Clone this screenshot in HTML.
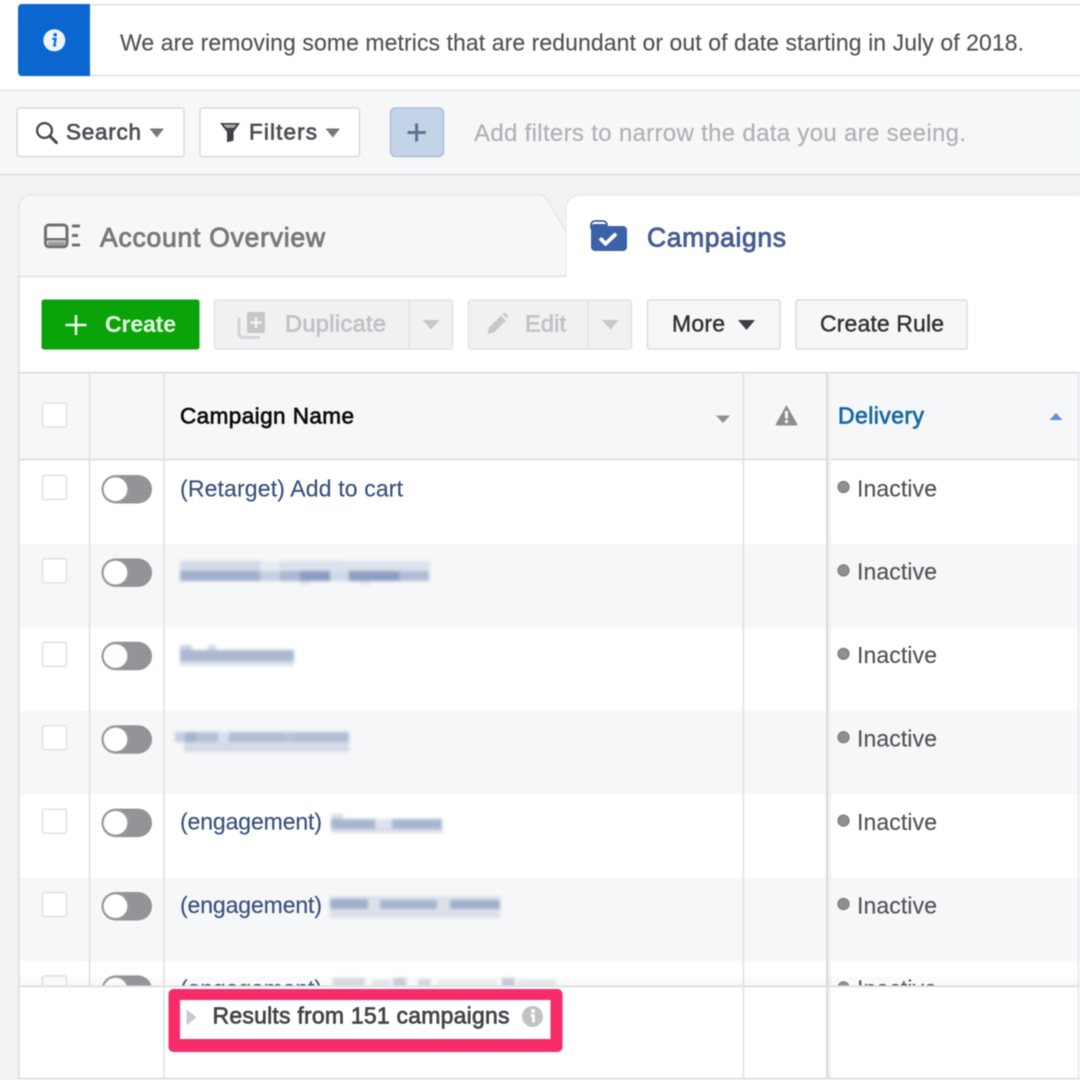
<!DOCTYPE html>
<html lang="en"><head><meta charset="utf-8"><title>Ads Manager</title>
<style>
html,body{margin:0;padding:0;width:1080px;height:1080px;overflow:hidden;background:#fff}
svg{display:block;position:absolute;left:0;top:0;filter:blur(.5px)}
text{font-family:"Liberation Sans",Arial,sans-serif;white-space:pre}
.m{stroke-width:.7;paint-order:stroke}
.b{font-weight:bold}
.n{font-size:23px;fill:#36507c;stroke:#36507c;stroke-width:.15}
.i{font-size:23px;fill:#4f5257;stroke:#4f5257;stroke-width:.15}
</style></head><body>
<svg width="1080" height="1080" viewBox="0 0 1080 1080" xmlns="http://www.w3.org/2000/svg">
<defs>
<g id="ck"><rect x="42.5" y="475.5" width="24" height="24" rx="2" fill="#fff" stroke="#dfe1e4" stroke-width="1.5"/></g>
<g id="tg"><rect x="101.5" y="475" width="50.5" height="28.5" rx="14.2" fill="#929497"/><circle cx="115.5" cy="489.2" r="12.6" fill="#fff" stroke="#9a9c9f" stroke-width="1.6"/></g>
<g id="dt"><circle cx="843.5" cy="487" r="5.6" fill="#8e9092" stroke="#737578" stroke-width="1"/></g>
<clipPath id="tc"><rect x="0" y="0" width="1080" height="986"/></clipPath>
</defs>

<!-- page background -->
<rect width="1080" height="1080" fill="#fff"/>
<rect y="175" width="1080" height="905" fill="#f0f2f4"/>

<!-- banner -->
<rect x="18" y="4" width="1062" height="1.6" fill="#e1e3e6"/>
<rect x="18" y="74.8" width="1062" height="1.6" fill="#dfe1e4"/>
<path d="M90 4H22a4 4 0 0 0-4 4v64a4 4 0 0 0 4 4h68z" fill="#0b66cf"/>
<circle cx="54.3" cy="40.3" r="11" fill="#eef5fc"/>
<circle cx="55.2" cy="34.8" r="1.8" fill="#0b66cf"/>
<path d="M52.4 38.8h3.2l-1.3 6.6h1.7" fill="none" stroke="#0b66cf" stroke-width="2.1"/>
<text x="120" y="50.5" font-size="23" fill="#4f5257" stroke="#4f5257" stroke-width=".15" textLength="904" lengthAdjust="spacing">We are removing some metrics that are redundant or out of date starting in July of 2018.</text>

<!-- filter bar -->
<rect y="91" width="1080" height="84" fill="#f6f7f9"/>
<rect y="89.3" width="1080" height="1.8" fill="#e3e5e8"/>
<rect y="173.6" width="1080" height="1.8" fill="#dee0e3"/>

<rect x="17" y="108" width="167" height="48.5" rx="2.5" fill="#fff" stroke="#d8dadd" stroke-width="1.5"/>
<circle cx="44.5" cy="130.5" r="7.4" fill="none" stroke="#44474b" stroke-width="2.3"/>
<path d="M49.8 136l6.6 6.6" stroke="#44474b" stroke-width="3" stroke-linecap="round"/>
<text x="66" y="139.5" font-size="22.5" fill="#4b4f56" stroke="#4b4f56" class="m" textLength="75" lengthAdjust="spacing">Search</text>
<path d="M149.5 128.5h14.5l-7.2 9z" fill="#74777c"/>

<rect x="200" y="108" width="159.5" height="48.5" rx="2.5" fill="#fff" stroke="#d8dadd" stroke-width="1.5"/>
<path d="M220 123h20l-6.4 9v8.6l-6.6 1.6V132z" fill="#3f4246"/>
<path d="M223.5 124.6h13l-2.6 3.2h-7.8z" fill="#a9abae"/>
<text x="249" y="139.5" font-size="22.5" fill="#4b4f56" stroke="#4b4f56" class="m" textLength="68" lengthAdjust="spacing">Filters</text>
<path d="M325.5 128.5h14.5l-7.2 9z" fill="#74777c"/>

<rect x="390.5" y="108" width="53" height="48.5" rx="5" fill="#c3d3e8" stroke="#afc0d7" stroke-width="1.5"/>
<path d="M416.6 123.5v18M407.5 132.5h18.2" stroke="#5c7391" stroke-width="3"/>
<text x="474" y="141" font-size="24" fill="#aeb1b5" stroke="#aeb1b5" stroke-width=".15" textLength="492" lengthAdjust="spacing">Add filters to narrow the data you are seeing.</text>

<!-- tabs -->
<path d="M19 277V207a12 12 0 0 1 12-12H538q7 0 10 6L566 232V277z" fill="#f6f7f9" stroke="#e3e5e8" stroke-width="1.3"/>
<path d="M566 277V209a14 14 0 0 1 14-14H1080V277z" fill="#fff"/>
<path d="M566 277V209a14 14 0 0 1 14-14H1080" fill="none" stroke="#e6e8ea" stroke-width="1.2"/>
<rect x="19" y="277" width="1061" height="100" fill="#fff"/>
<rect x="19" y="275.6" width="547.5" height="1.6" fill="#dfe1e4"/>
<rect x="18.2" y="277" width="1.6" height="100" fill="#dfe1e4"/>

<!-- account overview icon -->
<rect x="45.5" y="225" width="21.5" height="21.8" rx="3.5" fill="none" stroke="#6f7174" stroke-width="3"/>
<rect x="46" y="238" width="21" height="2.6" fill="#6f7174"/>
<rect x="48" y="241.5" width="17" height="4" fill="#9c9ea0"/>
<rect x="72" y="224.5" width="8" height="3" fill="#6f7174"/>
<rect x="72" y="234" width="6" height="3" fill="#6f7174"/>
<rect x="72" y="243.5" width="8" height="3" fill="#6f7174"/>
<text x="100" y="246.3" font-size="26.5" fill="#77797d" stroke="#77797d" stroke-width=".9" paint-order="stroke" textLength="225" lengthAdjust="spacing">Account Overview</text>

<!-- campaigns icon -->
<path d="M591 229v-4a4 4 0 0 1 4-4h8a4 4 0 0 1 4 4v1" fill="none" stroke="#2f4a7c" stroke-width="1.6"/>
<path d="M591 227a3 3 0 0 1 3-3h11q2 0 3 2h15a4 4 0 0 1 4 4v17a4 4 0 0 1-4 4H595a4 4 0 0 1-4-4z" fill="#3b62a9"/>
<path d="M600 238.3l5.6 5.4 10.5-10" fill="none" stroke="#fff" stroke-width="3.8"/>
<text x="647" y="246.3" font-size="26.5" fill="#475d94" stroke="#475d94" stroke-width=".9" paint-order="stroke" textLength="139" lengthAdjust="spacing">Campaigns</text>

<!-- toolbar -->
<rect x="41.5" y="299.5" width="158" height="50" rx="2.5" fill="#0aa30a"/>
<path d="M76 315v20M65.5 325h21" stroke="#eafbe8" stroke-width="2.6"/>
<text x="105" y="332" font-size="23" class="b" fill="#e8fae6" textLength="71" lengthAdjust="spacing">Create</text>

<rect x="214.5" y="300" width="238" height="49" rx="2.5" fill="#f0f1f3" stroke="#e2e3e6" stroke-width="1.5"/>
<rect x="408.5" y="300" width="1.3" height="49" fill="#dfe0e3"/>
<path d="M239 317.5v16a4 4 0 0 0 4 4h17" fill="none" stroke="#d3d5d8" stroke-width="3"/>
<rect x="247" y="312" width="18" height="21" rx="1.5" fill="#c6c8cb"/>
<path d="M256 317v11M250.5 322.5h11" stroke="#f5f5f6" stroke-width="2.2"/>
<text x="285" y="331.5" font-size="23.5" fill="#bfc2c6" stroke="#bfc2c6" class="m" textLength="101" lengthAdjust="spacing">Duplicate</text>
<path d="M422.5 320h17l-8.5 9.5z" fill="#c6c8cb"/>

<rect x="468.5" y="300" width="163" height="49" rx="2.5" fill="#f0f1f3" stroke="#e2e3e6" stroke-width="1.5"/>
<rect x="587.2" y="300" width="1.3" height="49" fill="#dfe0e3"/>
<path d="M487.5 334l1.5-6.5 12-12 5 5-12 12z" fill="#c6c8cb"/>
<path d="M502.5 314l2-1.8 4 4-2 2z" fill="#c6c8cb"/>
<text x="525" y="331.5" font-size="23.5" fill="#bfc2c6" stroke="#bfc2c6" class="m" textLength="41" lengthAdjust="spacing">Edit</text>
<path d="M602 320h17l-8.5 9.5z" fill="#c6c8cb"/>

<rect x="647.5" y="300" width="132.5" height="49" rx="2" fill="#f6f7f8" stroke="#dcdee1" stroke-width="1.5"/>
<text x="672" y="331.5" font-size="23" fill="#2e3135" stroke="#2e3135" stroke-width=".4" textLength="53" lengthAdjust="spacing">More</text>
<path d="M738 320h17l-8.5 10z" fill="#3c3f43"/>
<rect x="796" y="300" width="171" height="49" rx="2" fill="#f6f7f8" stroke="#dcdee1" stroke-width="1.5"/>
<text x="820" y="331.5" font-size="23" fill="#2e3135" stroke="#2e3135" stroke-width=".4" textLength="124" lengthAdjust="spacing">Create Rule</text>

<!-- table -->
<rect x="19" y="373" width="1061" height="87" fill="#f6f7f9"/>
<rect x="19" y="460" width="1061" height="620" fill="#fff"/>
<rect x="19" y="544" width="1061" height="83.5" fill="#f6f7f9"/>
<rect x="19" y="711" width="1061" height="83.5" fill="#f6f7f9"/>
<rect x="19" y="878" width="1061" height="83" fill="#f6f7f9"/>
<rect x="19" y="371.9" width="1061" height="1.6" fill="#d9dbde"/>
<rect x="19" y="458.8" width="1061" height="1.6" fill="#d9dbde"/>

<!-- header cells -->
<rect x="42.5" y="403" width="24" height="24" rx="2" fill="#fff" stroke="#dfe1e4" stroke-width="1.5"/>
<text x="180" y="423.5" font-size="22.5" fill="#0c0c0d" stroke="#0c0c0d" class="m" textLength="174" lengthAdjust="spacing">Campaign Name</text>
<path d="M716 415.5h14l-7 7.5z" fill="#8e9093"/>
<path d="M786.5 405l10.7 19a1 1 0 0 1-.9 1.5h-19.6a1 1 0 0 1-.9-1.5z" fill="#8b8d90"/>
<rect x="785" y="411" width="3" height="7.5" fill="#f5f6f8"/>
<rect x="785" y="420" width="3" height="3" fill="#f5f6f8"/>
<text x="838" y="423.5" font-size="23" fill="#16689f" stroke="#16689f" class="m" textLength="86" lengthAdjust="spacing">Delivery</text>
<path d="M1049.5 420h13l-6.5-7z" fill="#5a8fd4"/>

<!-- rows -->
<g clip-path="url(#tc)">
<use href="#ck"/><use href="#tg"/><use href="#dt"/>
<use href="#ck" y="83.4"/><use href="#tg" y="83.4"/><use href="#dt" y="83.4"/>
<use href="#ck" y="166.8"/><use href="#tg" y="166.8"/><use href="#dt" y="166.8"/>
<use href="#ck" y="250.2"/><use href="#tg" y="250.2"/><use href="#dt" y="250.2"/>
<use href="#ck" y="333.6"/><use href="#tg" y="333.6"/><use href="#dt" y="333.6"/>
<use href="#ck" y="417"/><use href="#tg" y="417"/><use href="#dt" y="417"/>
<use href="#ck" y="500.4"/><use href="#tg" y="500.4"/><use href="#dt" y="500.4"/>

<text class="n" x="180" y="496.3" textLength="223" lengthAdjust="spacing">(Retarget) Add to cart</text>
<text class="n" x="180" y="829.3" textLength="142" lengthAdjust="spacing">(engagement)</text>
<text class="n" x="180" y="912.8" textLength="142" lengthAdjust="spacing">(engagement)</text>
<text class="n" x="180" y="996.3" textLength="142" lengthAdjust="spacing">(engagement)</text>

<text class="i" x="857" y="496.3" textLength="80" lengthAdjust="spacing">Inactive</text>
<text class="i" x="857" y="579.7" textLength="80" lengthAdjust="spacing">Inactive</text>
<text class="i" x="857" y="663.1" textLength="80" lengthAdjust="spacing">Inactive</text>
<text class="i" x="857" y="746.5" textLength="80" lengthAdjust="spacing">Inactive</text>
<text class="i" x="857" y="829.9" textLength="80" lengthAdjust="spacing">Inactive</text>
<text class="i" x="857" y="913.3" textLength="80" lengthAdjust="spacing">Inactive</text>
<text class="i" x="857" y="996.7" textLength="80" lengthAdjust="spacing">Inactive</text>

<!-- blurred names -->
<g style="filter:blur(1.6px)">
<rect x="180" y="561" width="80" height="10" fill="#d3d9e6"/>
<rect x="260" y="561" width="20" height="10" fill="#e6eaf2"/>
<rect x="280" y="561" width="60" height="10" fill="#dce1eb"/>
<rect x="340" y="561" width="90" height="10" fill="#dde2ec"/>
<rect x="180" y="571" width="80" height="10" fill="#a0b0cd"/>
<rect x="260" y="571" width="20" height="10" fill="#c6cfe1"/>
<rect x="280" y="571" width="20" height="10" fill="#aab7d1"/>
<rect x="300" y="571" width="30" height="10" fill="#8b9dc2"/>
<rect x="330" y="571" width="19" height="10" fill="#d2d9e7"/>
<rect x="349" y="571" width="50" height="10" fill="#8c9dc2"/>
<rect x="399" y="571" width="30" height="10" fill="#b0bcd6"/>
<rect x="300" y="581" width="10" height="4" fill="#e1e5ee"/>
<rect x="360" y="581" width="10" height="4" fill="#e1e5ee"/>

<rect x="180" y="645" width="12" height="5" fill="#c9d1e2"/>
<rect x="208" y="645" width="8" height="5" fill="#d5dbe8"/>
<rect x="180" y="650" width="114" height="11" fill="#a9b7d2"/>
<rect x="180" y="661" width="114" height="5" fill="#d9dee9"/>

<rect x="175" y="732" width="15" height="10" fill="#c5cee0"/>
<rect x="185" y="732" width="11" height="10" fill="#a4b3cf"/>
<rect x="196" y="732" width="22" height="10" fill="#b5c1d8"/>
<rect x="218" y="732" width="11" height="10" fill="#d9dfea"/>
<rect x="229" y="732" width="55" height="10" fill="#b2bed6"/>
<rect x="284" y="732" width="10" height="10" fill="#b8c3d9"/>
<rect x="294" y="732" width="55" height="10" fill="#b2bed6"/>
<rect x="184" y="742" width="165" height="10" fill="#d5dae6"/>

<rect x="331" y="814" width="12" height="5" fill="#d6dce9"/>
<rect x="331" y="819" width="44" height="10" fill="#a7b5d1"/>
<rect x="375" y="819" width="17" height="10" fill="#dde2ec"/>
<rect x="392" y="819" width="50" height="10" fill="#a7b5d1"/>
<rect x="331" y="829" width="112" height="4" fill="#d9deea"/>

<rect x="330" y="896" width="170" height="22" fill="#dde1ea"/>
<rect x="330" y="899" width="38" height="10" fill="#a0afcc"/>
<rect x="380" y="900" width="57" height="9" fill="#a6b4cf"/>
<rect x="450" y="900" width="50" height="9" fill="#a0afcc"/>

<rect x="333" y="978" width="32" height="9" fill="#d9dce2"/>
<rect x="372" y="980" width="18" height="7" fill="#e6e8ec"/>
<rect x="393" y="978" width="13" height="9" fill="#c8cdd8"/>
<rect x="418" y="979" width="13" height="8" fill="#d5d8df"/>
<rect x="437" y="980" width="60" height="7" fill="#eceef1"/>
<rect x="502" y="978" width="13" height="9" fill="#c4cbd8"/>
<rect x="518" y="980" width="38" height="7" fill="#e6e8ec"/>
</g>
</g>

<!-- vertical column lines -->
<rect x="88.8" y="373" width="1.4" height="614" fill="#dcdee1"/>
<rect x="163.2" y="373" width="1.4" height="705" fill="#dcdee1"/>
<rect x="742.8" y="373" width="1.4" height="705" fill="#dcdee1"/>
<rect x="826" y="373" width="2" height="705" fill="#d8dadd"/>
<rect x="828" y="373" width="3" height="705" fill="#eff0f2"/>
<rect x="1077.8" y="373" width="1.4" height="705" fill="#e3e5e8"/>
<rect x="18.2" y="373" width="1.6" height="706" fill="#dcdee1"/>

<!-- footer -->
<rect x="19" y="985.4" width="1061" height="1.8" fill="#dcdee1"/>
<rect x="19" y="977" width="1061" height="8.4" fill="#aaacb0" opacity=".06"/>
<rect x="19" y="1077.8" width="1061" height="1.6" fill="#d9dbde"/>

<rect x="168.5" y="989" width="394" height="63" rx="5" fill="#f62c6b"/>
<rect x="180" y="1000" width="370.5" height="39" fill="#fff"/>
<path d="M186.5 1009.5l10 7.8-10 8z" fill="#c6c8cb"/>
<text x="212.5" y="1023.5" font-size="23" fill="#414449" stroke="#414449" class="m" textLength="297" lengthAdjust="spacing">Results from 151 campaigns</text>
<circle cx="532.5" cy="1016.5" r="10.5" fill="#c0c2c5"/>
<circle cx="533" cy="1011" r="2" fill="#fff"/>
<path d="M530.5 1015.5h3v7" fill="none" stroke="#fff" stroke-width="2.6"/>
</svg>
</body></html>
